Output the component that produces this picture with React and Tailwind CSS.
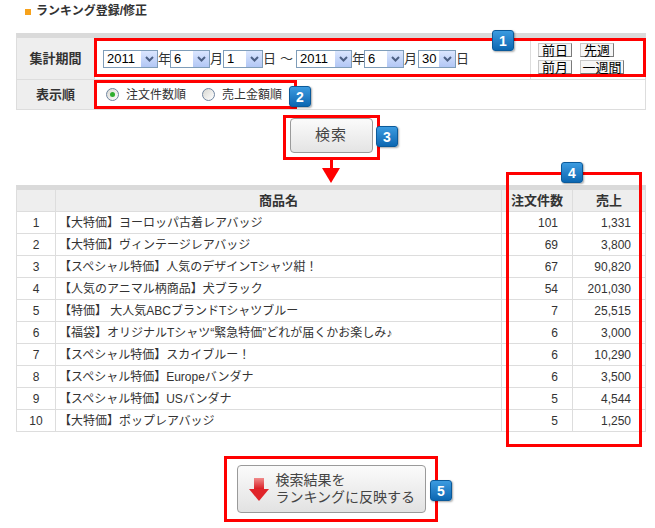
import React from 'react';

const rows = [
  ['1', '【大特価】ヨーロッパ古着レアバッジ', '101', '1,331'],
  ['2', '【大特価】ヴィンテージレアバッジ', '69', '3,800'],
  ['3', '【スペシャル特価】人気のデザインTシャツ紺！', '67', '90,820'],
  ['4', '【人気のアニマル柄商品】犬ブラック', '54', '201,030'],
  ['5', '【特価】 大人気ABCブランドTシャツブルー', '7', '25,515'],
  ['6', '【福袋】オリジナルTシャツ“緊急特価”どれが届くかお楽しみ♪', '6', '3,000'],
  ['7', '【スペシャル特価】スカイブルー！', '6', '10,290'],
  ['8', '【スペシャル特価】Europeバンダナ', '6', '3,500'],
  ['9', '【スペシャル特価】USバンダナ', '5', '4,544'],
  ['10', '【大特価】ポップレアバッジ', '5', '1,250'],
];

// dropdown drawn like the old XP style select
const Select = ({ width, value }) => (
  <div className={`flex items-center h-[18px] border border-[#7f9db9] bg-white ${width}`}>
    <span className="flex-1 pl-[3px] text-[13px] leading-none text-black">{value}</span>
    <span className="w-[16px] h-[16px] bg-gradient-to-b from-[#dbe6fe] to-[#b2c7f5] flex items-center justify-center">
      <svg width="9" height="6" viewBox="0 0 9 6">
        <path d="M1 1 L4.5 4.5 L8 1" stroke="#4d6185" strokeWidth="2" fill="none" />
      </svg>
    </span>
  </div>
);

const SmallBtn = ({ width, children }) => (
  <div className={`h-[14px] flex items-center justify-center bg-[#f6f6f6] border border-[#c8c8c8] border-b-[#7a7a7a] border-r-[#7a7a7a] text-[13px] leading-none text-black ${width}`}>
    {children}
  </div>
);

const Radio = ({ checked, label }) => (
  <div className="flex items-center gap-[7px]">
    <span className="w-[13px] h-[13px] rounded-full border border-[#6f85a0] bg-gradient-to-br from-[#d8d8d2] to-white flex items-center justify-center">
      {checked && <span className="w-[5px] h-[5px] rounded-full bg-[#2fae2f]" />}
    </span>
    <span className="text-[12px] text-[#333]">{label}</span>
  </div>
);

const Badge = ({ pos, n }) => (
  <div className={`absolute w-[22px] h-[21px] rounded-[3px] border border-[#0b5a9a] bg-gradient-to-b from-[#3b9be0] to-[#0a67b2] shadow-[1px_1px_2px_rgba(0,0,0,0.35)] flex items-center justify-center text-white font-bold text-[14px] leading-none ${pos}`}>
    {n}
  </div>
);

const RedBox = ({ pos }) => (
  <div className={`absolute border-[3px] border-[#ff0000] ${pos}`} />
);

export default function App() {
  return (
    <div className="relative w-[655px] h-[528px] bg-white text-[#333] font-['Liberation_Sans','Noto_Sans_CJK_JP',sans-serif]">
      {/* title */}
      <div className="h-[33px] pl-[25px] pt-[3px] flex items-start gap-[5px]">
        <span className="mt-[6px] w-[6px] h-[6px] bg-[#f7a21b]" />
        <span className="text-[12px] font-bold leading-[16px]">ランキング登録/修正</span>
      </div>

      {/* search form */}
      <div className="ml-[16px] w-[630px] border-t-[5px] border-t-[#dadada] border-x border-b border-[#dddddd]">
        <div className="flex h-[42px] border-b border-[#dddddd]">
          <div className="w-[78px] bg-[#eeeeee] border-r border-[#dddddd] flex items-center justify-center text-[13px] font-bold">集計期間</div>
          <div className="w-[435px] flex items-center pl-[8px] text-[13px]">
            <Select width="w-[55px]" value="2011" />
            <span className="w-[12px]">年</span>
            <Select width="w-[40px]" value="6" />
            <span className="w-[13px]">月</span>
            <Select width="w-[40px]" value="1" />
            <span className="w-[17px]">日</span>
            <span className="w-[16px]">～</span>
            <Select width="w-[56px]" value="2011" />
            <span className="w-[12px]">年</span>
            <Select width="w-[40px]" value="6" />
            <span className="w-[14px]">月</span>
            <Select width="w-[38px]" value="30" />
            <span>日</span>
          </div>
          <div className="flex-1 border-l border-[#dddddd] pl-[7px] pt-[5px] grid grid-cols-[34px_44px] gap-x-[8px] gap-y-[3px] content-start">
            <SmallBtn width="w-[34px]">前日</SmallBtn>
            <SmallBtn width="w-[34px]">先週</SmallBtn>
            <SmallBtn width="w-[34px]">前月</SmallBtn>
            <SmallBtn width="w-[44px]">一週間</SmallBtn>
          </div>
        </div>
        <div className="flex h-[29px]">
          <div className="w-[78px] bg-[#eeeeee] border-r border-[#dddddd] flex items-center justify-center text-[13px] font-bold">表示順</div>
          <div className="flex items-center pl-[11px] gap-[16px]">
            <Radio checked label="注文件数順" />
            <Radio label="売上金額順" />
          </div>
        </div>
      </div>

      {/* search button */}
      <div className="ml-[16px] w-[630px] flex justify-center pt-[8px]">
        <div className="w-[83px] h-[35px] rounded-[4px] border border-[#9a9a9a] bg-gradient-to-b from-[#fbfbfb] to-[#e4e4e4] flex items-center justify-center text-[15px] text-[#444] tracking-[1px]">
          検索
        </div>
      </div>

      {/* results */}
      <div className="ml-[16px] mt-[32px] w-[630px] border-t-[5px] border-t-[#dadada] border-x border-[#dddddd] text-[12px]">
        <div className="grid grid-cols-[39px_446px_71px_72px] h-[22px] bg-[#eeeeee] border-b border-[#dddddd] font-bold text-[13px]">
          <div className="border-r border-[#dddddd]" />
          <div className="border-r border-[#dddddd] flex items-center justify-center">商品名</div>
          <div className="border-r border-[#dddddd] flex items-center justify-center">注文件数</div>
          <div className="flex items-center justify-center">売上</div>
        </div>
        {rows.map((r) => (
          <div key={r[0]} className="grid grid-cols-[39px_446px_71px_72px] h-[22px] border-b border-[#dddddd]">
            <div className="border-r border-[#dddddd] flex items-center justify-center">{r[0]}</div>
            <div className="border-r border-[#dddddd] flex items-center pl-[3px] whitespace-nowrap">{r[1]}</div>
            <div className="border-r border-[#dddddd] flex items-center justify-end pr-[14px]">{r[2]}</div>
            <div className="flex items-center justify-end pr-[14px]">{r[3]}</div>
          </div>
        ))}
      </div>

      {/* reflect button */}
      <div className="ml-[16px] w-[630px] flex justify-center pt-[33px]">
        <div className="w-[189px] h-[48px] rounded-[4px] border border-[#9a9a9a] bg-gradient-to-b from-[#fbfbfb] to-[#e2e2e2] flex items-center pl-[11px] gap-[7px]">
          <svg width="20" height="23" viewBox="0 0 20 23">
            <defs>
              <linearGradient id="ar" x1="0" y1="0" x2="0" y2="1">
                <stop offset="0" stopColor="#f08a8a" />
                <stop offset="1" stopColor="#d8141b" />
              </linearGradient>
            </defs>
            <rect x="5" y="0" width="10" height="12" fill="url(#ar)" />
            <path d="M0 11 L20 11 L10 23 Z" fill="#e0242a" />
          </svg>
          <div className="text-[14px] leading-[17px] text-[#444]">
            <div>検索結果を</div>
            <div>ランキングに反映する</div>
          </div>
        </div>
      </div>

      {/* annotations */}
      <RedBox pos="left-[94px] top-[38px] w-[552px] h-[39px]" />
      <RedBox pos="left-[94px] top-[80px] w-[203px] h-[29px]" />
      <RedBox pos="left-[283px] top-[115px] w-[97px] h-[45px]" />
      <RedBox pos="left-[506px] top-[172px] w-[136px] h-[275px]" />
      <RedBox pos="left-[224px] top-[456px] w-[214px] h-[66px]" />

      <div className="absolute left-[330px] top-[160px] w-[3px] h-[9px] bg-[#ff0000]" />
      <div className="absolute left-[322px] top-[168px] w-0 h-0 border-l-[9px] border-r-[9px] border-t-[15px] border-l-transparent border-r-transparent border-t-[#ff0000]" />

      <Badge pos="left-[492px] top-[30px]" n="1" />
      <Badge pos="left-[289px] top-[86px]" n="2" />
      <Badge pos="left-[376px] top-[126px]" n="3" />
      <Badge pos="left-[561px] top-[162px]" n="4" />
      <Badge pos="left-[430px] top-[480px]" n="5" />
    </div>
  );
}
